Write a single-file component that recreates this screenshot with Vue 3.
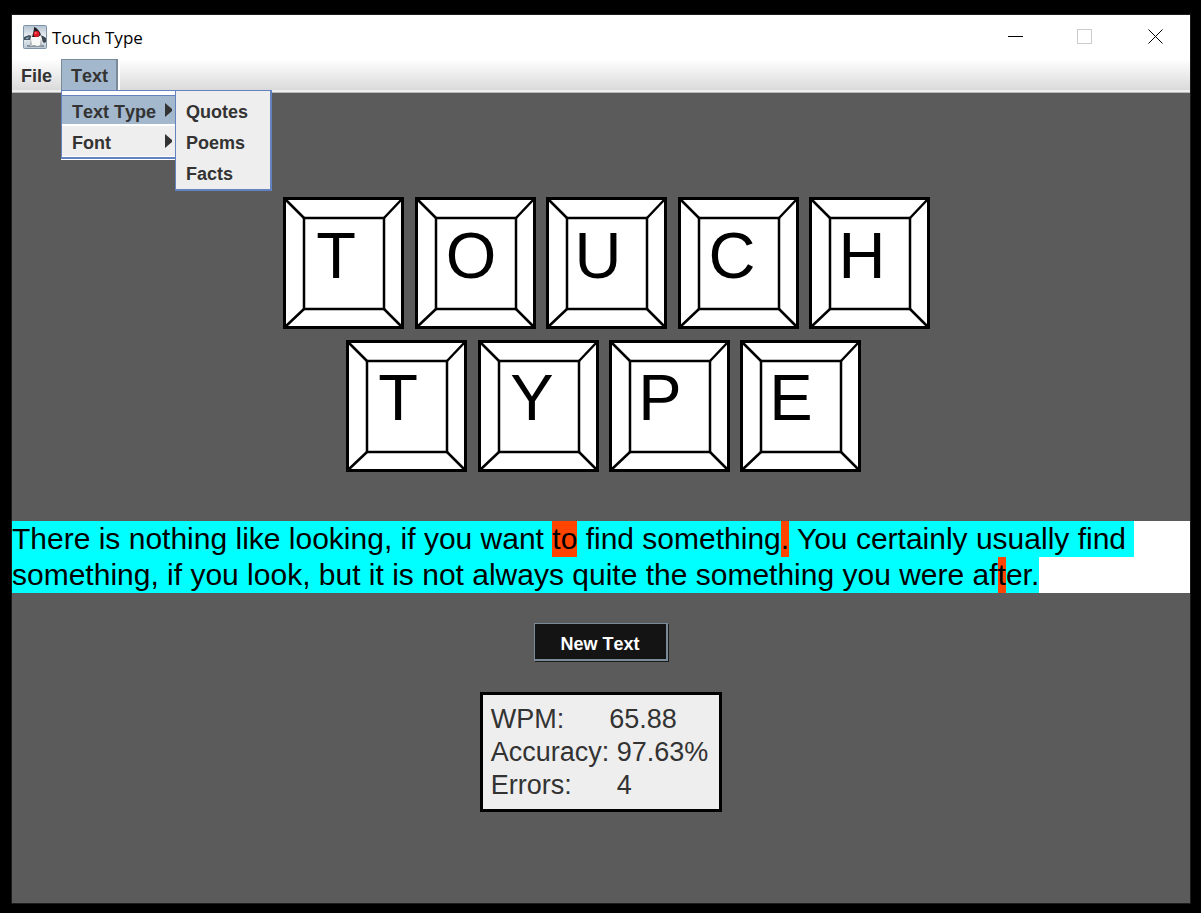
<script setup>
const topRow = [
  { letter: 'T', x: 12, tx: 65 },
  { letter: 'O', x: 144, tx: 200 },
  { letter: 'U', x: 275, tx: 327 },
  { letter: 'C', x: 407, tx: 461 },
  { letter: 'H', x: 538, tx: 591 },
].map((k) => ({ ...k, y: 0, baseline: 81 }))

const bottomRow = [
  { letter: 'T', x: 75, tx: 127 },
  { letter: 'Y', x: 207, tx: 261 },
  { letter: 'P', x: 338, tx: 389 },
  { letter: 'E', x: 469, tx: 520 },
].map((k) => ({ ...k, y: 143, baseline: 223 }))

const keys = [...topRow, ...bottomRow]

const passage = [
  { text: 'There is nothing like looking, if you want ', wrong: false },
  { text: 'to', wrong: true },
  { text: ' find something', wrong: false },
  { text: '.', wrong: true },
  { text: ' You certainly usually find ', wrong: false },
  { text: 'something, if you look, but it is not always quite the something you were af', wrong: false },
  { text: 't', wrong: true },
  { text: 'er.', wrong: false },
]

const stats = [
  { label: 'WPM:      ', value: '65.88' },
  { label: 'Accuracy: ', value: '97.63%' },
  { label: 'Errors:      ', value: '4' },
]

const textTypes = ['Quotes', 'Poems', 'Facts']
</script>

<template>
  <div class="desktop">
    <div class="window">
      <header class="titlebar">
        <svg class="app-icon" viewBox="0 0 24 24" aria-hidden="true">
          <defs>
            <linearGradient id="tile" x1="0" y1="0" x2="0" y2="1">
              <stop offset="0" stop-color="#b4c3d2" />
              <stop offset="0.5" stop-color="#eef2f5" />
              <stop offset="1" stop-color="#b8c6d3" />
            </linearGradient>
          </defs>
          <rect x="0.5" y="0.5" width="23" height="23" rx="1" fill="url(#tile)" stroke="#7f93a8" />
          <path d="M1 12l5-2 3 1-1 4-4 0-3 0z" fill="#4a5863" />
          <path d="M3 13l3-1-1 2-2 0z" fill="#8fb4cf" />
          <path d="M16 10l4 1 3 2v4l-2 1-4-4z" fill="#3b4750" />
          <path d="M4 20h17v2H4z" fill="#8a949d" />
          <path d="M9 10c-2 3-2 8-2 11l4-1 3 1 5-1c1-4 0-8-2-11z" fill="#f8f8f6" />
          <path d="M8 14c-1 2-1 4-1 7l2-1zM18 13l1 7-2 0z" fill="#aeb2b5" />
          <path d="M11 2c3 1 6 4 7 8l-3 2-6 0c1-4 2-6 2-10z" fill="#222226" />
          <circle cx="13.500" cy="9" r="3" fill="#e01824" />
          <circle cx="12.700" cy="8" r="1" fill="#f2686e" />
        </svg>
        <h1 class="title">Touch Type</h1>
        <div class="controls">
          <button type="button" class="control" aria-label="Minimize">
            <svg viewBox="0 0 16 16" aria-hidden="true"><path d="M1 7.500h15" stroke="#000" fill="none" /></svg>
          </button>
          <button type="button" class="control" aria-label="Maximize" disabled>
            <svg viewBox="0 0 16 16" aria-hidden="true"><rect x="0.500" y="0.500" width="14" height="14" stroke="#ccc" fill="none" /></svg>
          </button>
          <button type="button" class="control" aria-label="Close">
            <svg viewBox="0 0 16 16" aria-hidden="true"><path d="M1.500 0.500l14 14M15.500 0.500l-14 14" stroke="#000" fill="none" /></svg>
          </button>
        </div>
      </header>

      <nav class="menubar">
        <button type="button" class="menu">File</button>
        <div class="menu-holder">
          <button type="button" class="menu open" aria-expanded="true">Text</button>
          <div class="popups">
            <ul class="popup main-popup">
              <li>
                <button type="button" class="item active">
                  Text Type
                  <svg class="arrow" viewBox="0 0 7 14" aria-hidden="true"><path d="M0 0l7 6v2l-7 6z" fill="#333" /></svg>
                </button>
              </li>
              <li>
                <button type="button" class="item">
                  Font
                  <svg class="arrow" viewBox="0 0 7 14" aria-hidden="true"><path d="M0 0l7 6v2l-7 6z" fill="#333" /></svg>
                </button>
              </li>
            </ul>
            <ul class="popup sub-popup">
              <li v-for="t in textTypes" :key="t">
                <button type="button" class="item">{{ t }}</button>
              </li>
            </ul>
          </div>
        </div>
      </nav>

      <main class="content">
        <svg class="logo" viewBox="0 0 660 276" role="img" aria-label="Touch Type">
          <g v-for="(k, i) in keys" :key="i" :transform="`translate(${k.x} ${k.y})`">
            <rect x="1.500" y="1.500" width="118" height="129" fill="#fff" stroke="#000" stroke-width="3" />
            <rect x="21" y="21" width="80" height="91" fill="#fff" stroke="#000" stroke-width="2.500" />
            <path d="M2 2L21 21M119 2L101 21M2 130L21 112M119 130L101 112" stroke="#000" stroke-width="2.500" />
          </g>
          <text v-for="(k, i) in keys" :key="`t${i}`" :x="k.tx" :y="k.baseline" class="key-letter">{{ k.letter }}</text>
        </svg>

        <p class="passage"><span v-for="(p, i) in passage" :key="i" :class="p.wrong ? 'wrong' : 'right'">{{ p.text }}</span></p>

        <button type="button" class="new-text">New Text</button>

        <dl class="stats">
          <div v-for="s in stats" :key="s.label" class="stat">
            <dt>{{ s.label }}</dt>
            <dd>{{ s.value }}</dd>
          </div>
        </dl>
      </main>
    </div>
  </div>
</template>

<style>
body {
  margin: 0;
  background: #000;
}
</style>

<style scoped>
* {
  box-sizing: border-box;
}

button {
  margin: 0;
  padding: 0;
  border: 0;
  background: none;
  font: inherit;
  font-kerning: none;
  color: inherit;
}

.desktop {
  display: flex;
  min-height: 100vh;
  padding: 14px 10px 9px 11px;
  background: #000;
  font-family: "Liberation Sans", Arial, sans-serif;
}

.window {
  display: flex;
  flex: 1;
  flex-direction: column;
  border: 1px solid #1c1c1c;
  background: #5b5b5b;
}

.titlebar {
  display: flex;
  align-items: center;
  height: 44px;
  padding-left: 11px;
  background: #fff;
}

.app-icon {
  width: 24px;
  height: 24px;
}

.title {
  margin: 0 0 0 5px;
  padding-top: 2px;
  font: 400 17px/24px "Open Sans", "Noto Sans", sans-serif;
  color: #000;
}

.controls {
  display: flex;
  margin-left: auto;
}

.control {
  display: grid;
  place-items: center;
  width: 70px;
  height: 44px;
}

.control svg {
  width: 16px;
  height: 16px;
}

.menubar {
  display: flex;
  height: 34px;
  padding-bottom: 2px;
  background: linear-gradient(#fff, #dadada 31px, #eee 31px, #eee 33px, #bbb 33px);
  font-size: 18px;
  font-weight: 700;
  color: #333;
}

.menu {
  height: 32px;
  padding: 2px 9px 0;
}

.menu-holder {
  position: relative;
  z-index: 1;
}

.menu.open {
  padding: 1px 8px 0 9px;
  border: 1px solid #7a8a99;
  border-width: 1px 2px 0 1px;
  background: #a3b8cc;
  box-shadow: 2px 0 #fff;
}

.popups {
  position: absolute;
  top: 31px;
  left: 0;
  display: flex;
  align-items: flex-start;
}

.popup {
  margin: 0;
  padding: 0;
  border: 1px solid #6382bf;
  background: #eee;
  list-style: none;
}

.main-popup {
  width: 114px;
  padding-top: 4px;
  border-right: 0;
  border-bottom-width: 2px;
  background: #fff;
  box-shadow: 0 1px #fff;
}

.main-popup .item {
  padding-top: 5px;
  border-bottom: 1px solid #fff;
  background: #eee;
}

.main-popup .item.active {
  border-top: 1px solid #6382bf;
  border-bottom: 2px solid #fff;
  background: #a3b8cc;
}

.sub-popup {
  width: 97px;
  padding-top: 5px;
  border-right-width: 2px;
  border-bottom-width: 2px;
}

.item {
  display: flex;
  align-items: center;
  justify-content: space-between;
  width: 100%;
  height: 31px;
  padding: 1px 3px 0 10px;
  white-space: nowrap;
}

.arrow {
  flex: none;
  width: 7px;
  height: 14px;
  margin-bottom: 6px;
}

.content {
  display: flex;
  flex: 1;
  flex-direction: column;
  align-items: center;
  padding-top: 104px;
}

.logo {
  width: 660px;
  height: 276px;
}

.key-letter {
  font-size: 65px;
  text-anchor: middle;
}

.passage {
  align-self: stretch;
  margin: 48px 0 30px;
  background: #fff;
  font-size: 30px;
  line-height: 36px;
  white-space: break-spaces;
  color: #000;
}

.passage span {
  padding: 1px 0 2px;
}

.right {
  background: #0ff;
}

.wrong {
  background: #ff4500;
}

.new-text {
  height: 38px;
  padding: 5px 26px 0 25px;
  border: 1px solid #7a8a99;
  border-width: 1px 2px 2px 1px;
  background: #141414;
  box-shadow: 1px 1px #1c1c1c;
  font-size: 18px;
  font-weight: 700;
  color: #fff;
}

.stats {
  margin: 31px 0 0;
  padding: 8px 11px 7px 8px;
  border: 3px solid #000;
  background: #eee;
  font-size: 27px;
  font-kerning: none;
  line-height: 33px;
  color: #333;
}

.stat {
  display: flex;
  white-space: pre;
}

.stat dd {
  margin: 0;
}
</style>
